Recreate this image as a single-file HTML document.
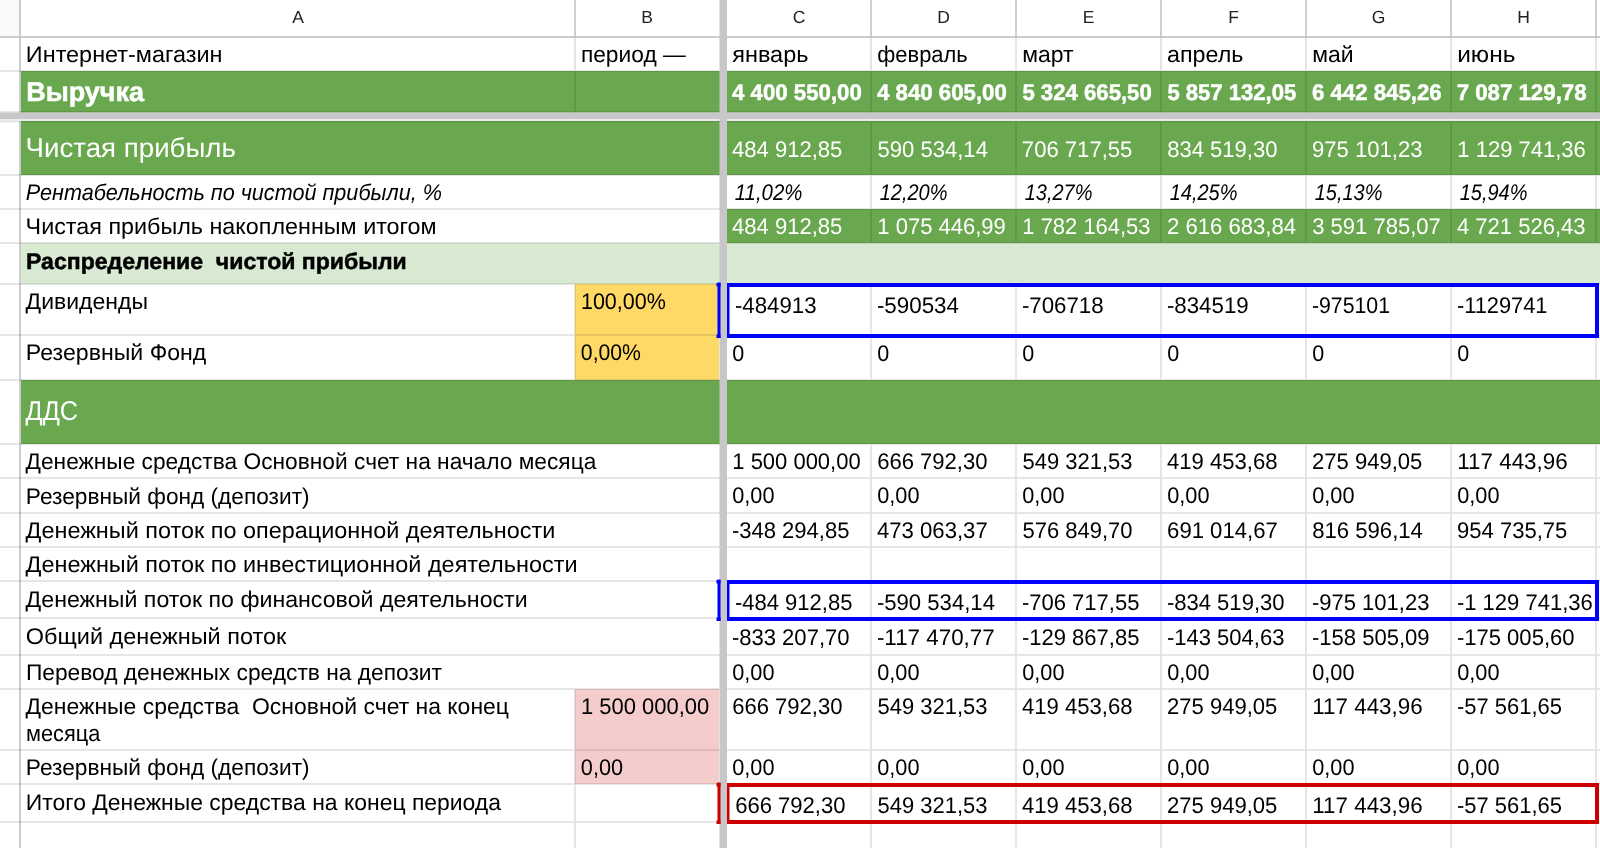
<!DOCTYPE html>
<html lang="ru">
<head>
<meta charset="utf-8">
<title>Sheet</title>
<style>
html, body { margin: 0; padding: 0; width: 1600px; height: 848px; overflow: hidden; background: #fff; }
svg { display: block; will-change: transform; }
</style>
</head>
<body>
<svg width="1600" height="848" viewBox="0 0 1600 848" font-family='"Liberation Sans", sans-serif' text-rendering="geometricPrecision">
<rect x="0.00" y="0.00" width="19.50" height="36.50" fill="#f8f9fa"/>
<rect x="21.00" y="71.00" width="1579.00" height="41.60" fill="#6aa84f"/>
<rect x="21.00" y="121.00" width="1579.00" height="54.00" fill="#6aa84f"/>
<rect x="727.00" y="209.00" width="873.00" height="34.00" fill="#6aa84f"/>
<rect x="21.00" y="243.00" width="1579.00" height="41.00" fill="#d9ead3"/>
<rect x="575.00" y="284.00" width="144.00" height="96.00" fill="#ffd966"/>
<rect x="21.00" y="380.00" width="1579.00" height="64.00" fill="#6aa84f"/>
<rect x="575.00" y="689.00" width="144.00" height="95.00" fill="#f4cccc"/>
<g fill="#000" opacity="0.115"><rect x="0.00" y="70.15" width="1600.00" height="1.70"/><rect x="0.00" y="111.15" width="1600.00" height="1.70"/><rect x="0.00" y="120.55" width="1600.00" height="1.70"/><rect x="0.00" y="174.15" width="1600.00" height="1.70"/><rect x="0.00" y="208.15" width="1600.00" height="1.70"/><rect x="0.00" y="242.15" width="1600.00" height="1.70"/><rect x="0.00" y="283.15" width="1600.00" height="1.70"/><rect x="0.00" y="334.15" width="1600.00" height="1.70"/><rect x="0.00" y="379.15" width="1600.00" height="1.70"/><rect x="0.00" y="443.15" width="1600.00" height="1.70"/><rect x="0.00" y="477.15" width="1600.00" height="1.70"/><rect x="0.00" y="512.15" width="1600.00" height="1.70"/><rect x="0.00" y="546.15" width="1600.00" height="1.70"/><rect x="0.00" y="580.15" width="1600.00" height="1.70"/><rect x="0.00" y="617.15" width="1600.00" height="1.70"/><rect x="0.00" y="654.15" width="1600.00" height="1.70"/><rect x="0.00" y="688.15" width="1600.00" height="1.70"/><rect x="0.00" y="749.15" width="1600.00" height="1.70"/><rect x="0.00" y="783.15" width="1600.00" height="1.70"/><rect x="0.00" y="821.15" width="1600.00" height="1.70"/><rect x="574.15" y="37.00" width="1.70" height="34.00"/><rect x="870.15" y="37.00" width="1.70" height="34.00"/><rect x="1015.15" y="37.00" width="1.70" height="34.00"/><rect x="1160.15" y="37.00" width="1.70" height="34.00"/><rect x="1305.15" y="37.00" width="1.70" height="34.00"/><rect x="1450.15" y="37.00" width="1.70" height="34.00"/><rect x="1595.15" y="37.00" width="1.70" height="34.00"/><rect x="574.15" y="71.00" width="1.70" height="41.60"/><rect x="870.15" y="71.00" width="1.70" height="41.60"/><rect x="1015.15" y="71.00" width="1.70" height="41.60"/><rect x="1160.15" y="71.00" width="1.70" height="41.60"/><rect x="1305.15" y="71.00" width="1.70" height="41.60"/><rect x="1450.15" y="71.00" width="1.70" height="41.60"/><rect x="1595.15" y="71.00" width="1.70" height="41.60"/><rect x="870.15" y="121.00" width="1.70" height="54.00"/><rect x="1015.15" y="121.00" width="1.70" height="54.00"/><rect x="1160.15" y="121.00" width="1.70" height="54.00"/><rect x="1305.15" y="121.00" width="1.70" height="54.00"/><rect x="1450.15" y="121.00" width="1.70" height="54.00"/><rect x="1595.15" y="121.00" width="1.70" height="54.00"/><rect x="870.15" y="175.00" width="1.70" height="34.00"/><rect x="1015.15" y="175.00" width="1.70" height="34.00"/><rect x="1160.15" y="175.00" width="1.70" height="34.00"/><rect x="1305.15" y="175.00" width="1.70" height="34.00"/><rect x="1450.15" y="175.00" width="1.70" height="34.00"/><rect x="1595.15" y="175.00" width="1.70" height="34.00"/><rect x="870.15" y="209.00" width="1.70" height="34.00"/><rect x="1015.15" y="209.00" width="1.70" height="34.00"/><rect x="1160.15" y="209.00" width="1.70" height="34.00"/><rect x="1305.15" y="209.00" width="1.70" height="34.00"/><rect x="1450.15" y="209.00" width="1.70" height="34.00"/><rect x="1595.15" y="209.00" width="1.70" height="34.00"/><rect x="574.15" y="284.00" width="1.70" height="51.00"/><rect x="870.15" y="284.00" width="1.70" height="51.00"/><rect x="1015.15" y="284.00" width="1.70" height="51.00"/><rect x="1160.15" y="284.00" width="1.70" height="51.00"/><rect x="1305.15" y="284.00" width="1.70" height="51.00"/><rect x="1450.15" y="284.00" width="1.70" height="51.00"/><rect x="1595.15" y="284.00" width="1.70" height="51.00"/><rect x="574.15" y="335.00" width="1.70" height="45.00"/><rect x="870.15" y="335.00" width="1.70" height="45.00"/><rect x="1015.15" y="335.00" width="1.70" height="45.00"/><rect x="1160.15" y="335.00" width="1.70" height="45.00"/><rect x="1305.15" y="335.00" width="1.70" height="45.00"/><rect x="1450.15" y="335.00" width="1.70" height="45.00"/><rect x="1595.15" y="335.00" width="1.70" height="45.00"/><rect x="870.15" y="444.00" width="1.70" height="34.00"/><rect x="1015.15" y="444.00" width="1.70" height="34.00"/><rect x="1160.15" y="444.00" width="1.70" height="34.00"/><rect x="1305.15" y="444.00" width="1.70" height="34.00"/><rect x="1450.15" y="444.00" width="1.70" height="34.00"/><rect x="1595.15" y="444.00" width="1.70" height="34.00"/><rect x="870.15" y="478.00" width="1.70" height="35.00"/><rect x="1015.15" y="478.00" width="1.70" height="35.00"/><rect x="1160.15" y="478.00" width="1.70" height="35.00"/><rect x="1305.15" y="478.00" width="1.70" height="35.00"/><rect x="1450.15" y="478.00" width="1.70" height="35.00"/><rect x="1595.15" y="478.00" width="1.70" height="35.00"/><rect x="870.15" y="513.00" width="1.70" height="34.00"/><rect x="1015.15" y="513.00" width="1.70" height="34.00"/><rect x="1160.15" y="513.00" width="1.70" height="34.00"/><rect x="1305.15" y="513.00" width="1.70" height="34.00"/><rect x="1450.15" y="513.00" width="1.70" height="34.00"/><rect x="1595.15" y="513.00" width="1.70" height="34.00"/><rect x="870.15" y="547.00" width="1.70" height="34.00"/><rect x="1015.15" y="547.00" width="1.70" height="34.00"/><rect x="1160.15" y="547.00" width="1.70" height="34.00"/><rect x="1305.15" y="547.00" width="1.70" height="34.00"/><rect x="1450.15" y="547.00" width="1.70" height="34.00"/><rect x="1595.15" y="547.00" width="1.70" height="34.00"/><rect x="870.15" y="581.00" width="1.70" height="37.00"/><rect x="1015.15" y="581.00" width="1.70" height="37.00"/><rect x="1160.15" y="581.00" width="1.70" height="37.00"/><rect x="1305.15" y="581.00" width="1.70" height="37.00"/><rect x="1450.15" y="581.00" width="1.70" height="37.00"/><rect x="1595.15" y="581.00" width="1.70" height="37.00"/><rect x="870.15" y="618.00" width="1.70" height="37.00"/><rect x="1015.15" y="618.00" width="1.70" height="37.00"/><rect x="1160.15" y="618.00" width="1.70" height="37.00"/><rect x="1305.15" y="618.00" width="1.70" height="37.00"/><rect x="1450.15" y="618.00" width="1.70" height="37.00"/><rect x="1595.15" y="618.00" width="1.70" height="37.00"/><rect x="870.15" y="655.00" width="1.70" height="34.00"/><rect x="1015.15" y="655.00" width="1.70" height="34.00"/><rect x="1160.15" y="655.00" width="1.70" height="34.00"/><rect x="1305.15" y="655.00" width="1.70" height="34.00"/><rect x="1450.15" y="655.00" width="1.70" height="34.00"/><rect x="1595.15" y="655.00" width="1.70" height="34.00"/><rect x="574.15" y="689.00" width="1.70" height="61.00"/><rect x="870.15" y="689.00" width="1.70" height="61.00"/><rect x="1015.15" y="689.00" width="1.70" height="61.00"/><rect x="1160.15" y="689.00" width="1.70" height="61.00"/><rect x="1305.15" y="689.00" width="1.70" height="61.00"/><rect x="1450.15" y="689.00" width="1.70" height="61.00"/><rect x="1595.15" y="689.00" width="1.70" height="61.00"/><rect x="574.15" y="750.00" width="1.70" height="34.00"/><rect x="870.15" y="750.00" width="1.70" height="34.00"/><rect x="1015.15" y="750.00" width="1.70" height="34.00"/><rect x="1160.15" y="750.00" width="1.70" height="34.00"/><rect x="1305.15" y="750.00" width="1.70" height="34.00"/><rect x="1450.15" y="750.00" width="1.70" height="34.00"/><rect x="1595.15" y="750.00" width="1.70" height="34.00"/><rect x="574.15" y="784.00" width="1.70" height="38.00"/><rect x="870.15" y="784.00" width="1.70" height="38.00"/><rect x="1015.15" y="784.00" width="1.70" height="38.00"/><rect x="1160.15" y="784.00" width="1.70" height="38.00"/><rect x="1305.15" y="784.00" width="1.70" height="38.00"/><rect x="1450.15" y="784.00" width="1.70" height="38.00"/><rect x="1595.15" y="784.00" width="1.70" height="38.00"/><rect x="574.15" y="822.00" width="1.70" height="26.00"/><rect x="870.15" y="822.00" width="1.70" height="26.00"/><rect x="1015.15" y="822.00" width="1.70" height="26.00"/><rect x="1160.15" y="822.00" width="1.70" height="26.00"/><rect x="1305.15" y="822.00" width="1.70" height="26.00"/><rect x="1450.15" y="822.00" width="1.70" height="26.00"/><rect x="1595.15" y="822.00" width="1.70" height="26.00"/></g>
<g fill="#000" opacity="0.22"><rect x="0.00" y="36.10" width="1600.00" height="1.80"/><rect x="19.10" y="0.00" width="1.80" height="848.00"/><rect x="574.15" y="0.00" width="1.70" height="36.00"/><rect x="870.15" y="0.00" width="1.70" height="36.00"/><rect x="1015.15" y="0.00" width="1.70" height="36.00"/><rect x="1160.15" y="0.00" width="1.70" height="36.00"/><rect x="1305.15" y="0.00" width="1.70" height="36.00"/><rect x="1450.15" y="0.00" width="1.70" height="36.00"/><rect x="1595.15" y="0.00" width="1.70" height="36.00"/></g>
<rect x="0.00" y="112.60" width="1600.00" height="6.40" fill="#c7c7c9"/>
<rect x="0.00" y="119.00" width="1600.00" height="2.00" fill="#ececec"/>
<rect x="719.50" y="0.00" width="7.50" height="848.00" fill="#c7c7c9"/>
<rect x="727.00" y="283.00" width="872.00" height="4.00" fill="#0000ff"/>
<rect x="727.00" y="334.00" width="872.00" height="4.00" fill="#0000ff"/>
<rect x="727.00" y="283.00" width="2.50" height="55.00" fill="#0000ff"/>
<rect x="1595.00" y="283.00" width="4.00" height="55.00" fill="#0000ff"/>
<rect x="717.50" y="282.50" width="3.00" height="55.50" fill="#0000ff"/>
<rect x="716.50" y="283.00" width="4.00" height="3.50" fill="#0000ff"/>
<rect x="716.50" y="334.50" width="4.00" height="3.50" fill="#0000ff"/>
<rect x="727.00" y="580.00" width="872.00" height="4.00" fill="#0000ff"/>
<rect x="727.00" y="617.00" width="872.00" height="4.00" fill="#0000ff"/>
<rect x="727.00" y="580.00" width="2.50" height="41.00" fill="#0000ff"/>
<rect x="1595.00" y="580.00" width="4.00" height="41.00" fill="#0000ff"/>
<rect x="717.50" y="579.50" width="3.00" height="41.50" fill="#0000ff"/>
<rect x="716.50" y="580.00" width="4.00" height="3.50" fill="#0000ff"/>
<rect x="716.50" y="617.50" width="4.00" height="3.50" fill="#0000ff"/>
<rect x="727.00" y="783.00" width="872.00" height="4.00" fill="#cc0000"/>
<rect x="727.00" y="820.00" width="872.00" height="4.00" fill="#cc0000"/>
<rect x="727.00" y="783.00" width="2.50" height="41.00" fill="#cc0000"/>
<rect x="1595.00" y="783.00" width="4.00" height="41.00" fill="#cc0000"/>
<rect x="717.50" y="782.50" width="3.00" height="41.50" fill="#cc0000"/>
<rect x="716.50" y="783.00" width="4.00" height="3.50" fill="#cc0000"/>
<rect x="716.50" y="820.50" width="4.00" height="3.50" fill="#cc0000"/>
<g font-family='"Liberation Sans", sans-serif'>
<text x="298.00" y="23.4" font-size="17.5" text-anchor="middle" fill="#202124">A</text>
<text x="647.00" y="23.4" font-size="17.5" text-anchor="middle" fill="#202124">B</text>
<text x="799.00" y="23.4" font-size="17.5" text-anchor="middle" fill="#202124">C</text>
<text x="943.50" y="23.4" font-size="17.5" text-anchor="middle" fill="#202124">D</text>
<text x="1088.50" y="23.4" font-size="17.5" text-anchor="middle" fill="#202124">E</text>
<text x="1233.50" y="23.4" font-size="17.5" text-anchor="middle" fill="#202124">F</text>
<text x="1378.50" y="23.4" font-size="17.5" text-anchor="middle" fill="#202124">G</text>
<text x="1523.50" y="23.4" font-size="17.5" text-anchor="middle" fill="#202124">H</text>
</g>
<text x="25.86" y="62.30" font-size="22.62" fill="#000" textLength="196.68" lengthAdjust="spacingAndGlyphs" xml:space="preserve">Интернет-магазин</text>
<text x="580.90" y="62.30" font-size="22.62" fill="#000" textLength="104.86" lengthAdjust="spacingAndGlyphs" xml:space="preserve">период —</text>
<text x="732.20" y="62.30" font-size="22.62" fill="#000" textLength="76.27" lengthAdjust="spacingAndGlyphs" xml:space="preserve">январь</text>
<text x="877.28" y="62.30" font-size="22.62" fill="#000" textLength="90.47" lengthAdjust="spacingAndGlyphs" xml:space="preserve">февраль</text>
<text x="1022.30" y="62.30" font-size="22.62" fill="#000" textLength="51.33" lengthAdjust="spacingAndGlyphs" xml:space="preserve">март</text>
<text x="1167.02" y="62.30" font-size="22.62" fill="#000" textLength="76.33" lengthAdjust="spacingAndGlyphs" xml:space="preserve">апрель</text>
<text x="1312.28" y="62.30" font-size="22.62" fill="#000" textLength="41.40" lengthAdjust="spacingAndGlyphs" xml:space="preserve">май</text>
<text x="1457.18" y="62.30" font-size="22.62" fill="#000" textLength="58.29" lengthAdjust="spacingAndGlyphs" xml:space="preserve">июнь</text>
<text x="26.15" y="101.30" font-size="27.19" font-weight="bold" stroke="#ffffff" stroke-width="0.5" fill="#ffffff" textLength="117.89" lengthAdjust="spacingAndGlyphs" xml:space="preserve">Выручка</text>
<text x="732.04" y="99.90" font-size="22.62" font-weight="bold" stroke="#ffffff" stroke-width="0.5" fill="#ffffff" textLength="129.74" lengthAdjust="spacingAndGlyphs" xml:space="preserve">4 400 550,00</text>
<text x="877.04" y="99.90" font-size="22.62" font-weight="bold" stroke="#ffffff" stroke-width="0.5" fill="#ffffff" textLength="129.74" lengthAdjust="spacingAndGlyphs" xml:space="preserve">4 840 605,00</text>
<text x="1022.38" y="99.90" font-size="22.62" font-weight="bold" stroke="#ffffff" stroke-width="0.5" fill="#ffffff" textLength="129.39" lengthAdjust="spacingAndGlyphs" xml:space="preserve">5 324 665,50</text>
<text x="1167.39" y="99.90" font-size="22.62" font-weight="bold" stroke="#ffffff" stroke-width="0.5" fill="#ffffff" textLength="128.89" lengthAdjust="spacingAndGlyphs" xml:space="preserve">5 857 132,05</text>
<text x="1311.95" y="99.90" font-size="22.62" font-weight="bold" stroke="#ffffff" stroke-width="0.5" fill="#ffffff" textLength="129.80" lengthAdjust="spacingAndGlyphs" xml:space="preserve">6 442 845,26</text>
<text x="1456.63" y="99.90" font-size="22.62" font-weight="bold" stroke="#ffffff" stroke-width="0.5" fill="#ffffff" textLength="129.94" lengthAdjust="spacingAndGlyphs" xml:space="preserve">7 087 129,78</text>
<text x="25.62" y="156.50" font-size="27.19" fill="#ffffff" textLength="210.31" lengthAdjust="spacingAndGlyphs" xml:space="preserve">Чистая прибыль</text>
<text x="731.95" y="156.60" font-size="22.62" fill="#ffffff" textLength="110.44" lengthAdjust="spacingAndGlyphs" xml:space="preserve">484 912,85</text>
<text x="877.53" y="156.60" font-size="22.62" fill="#ffffff" textLength="110.40" lengthAdjust="spacingAndGlyphs" xml:space="preserve">590 534,14</text>
<text x="1021.87" y="156.60" font-size="22.62" fill="#ffffff" textLength="110.53" lengthAdjust="spacingAndGlyphs" xml:space="preserve">706 717,55</text>
<text x="1167.15" y="156.60" font-size="22.62" fill="#ffffff" textLength="110.35" lengthAdjust="spacingAndGlyphs" xml:space="preserve">834 519,30</text>
<text x="1312.10" y="156.60" font-size="22.62" fill="#ffffff" textLength="110.32" lengthAdjust="spacingAndGlyphs" xml:space="preserve">975 101,23</text>
<text x="1457.33" y="156.60" font-size="22.62" fill="#ffffff" textLength="128.43" lengthAdjust="spacingAndGlyphs" xml:space="preserve">1 129 741,36</text>
<text x="25.85" y="199.80" font-size="22.62" font-style="italic" fill="#000" textLength="416.03" lengthAdjust="spacingAndGlyphs" xml:space="preserve">Рентабельность по чистой прибыли, %</text>
<text x="734.71" y="199.50" font-size="22.62" font-style="italic" fill="#000" textLength="67.72" lengthAdjust="spacingAndGlyphs" xml:space="preserve">11,02%</text>
<text x="879.71" y="199.50" font-size="22.62" font-style="italic" fill="#000" textLength="67.72" lengthAdjust="spacingAndGlyphs" xml:space="preserve">12,20%</text>
<text x="1024.71" y="199.50" font-size="22.62" font-style="italic" fill="#000" textLength="67.72" lengthAdjust="spacingAndGlyphs" xml:space="preserve">13,27%</text>
<text x="1169.71" y="199.50" font-size="22.62" font-style="italic" fill="#000" textLength="67.72" lengthAdjust="spacingAndGlyphs" xml:space="preserve">14,25%</text>
<text x="1314.71" y="199.50" font-size="22.62" font-style="italic" fill="#000" textLength="67.72" lengthAdjust="spacingAndGlyphs" xml:space="preserve">15,13%</text>
<text x="1459.71" y="199.50" font-size="22.62" font-style="italic" fill="#000" textLength="67.72" lengthAdjust="spacingAndGlyphs" xml:space="preserve">15,94%</text>
<text x="25.59" y="234.30" font-size="22.62" fill="#000" textLength="411.06" lengthAdjust="spacingAndGlyphs" xml:space="preserve">Чистая прибыль накопленным итогом</text>
<text x="731.95" y="234.40" font-size="22.62" fill="#ffffff" textLength="110.44" lengthAdjust="spacingAndGlyphs" xml:space="preserve">484 912,85</text>
<text x="877.33" y="234.40" font-size="22.62" fill="#ffffff" textLength="128.40" lengthAdjust="spacingAndGlyphs" xml:space="preserve">1 075 446,99</text>
<text x="1022.33" y="234.40" font-size="22.62" fill="#ffffff" textLength="128.21" lengthAdjust="spacingAndGlyphs" xml:space="preserve">1 782 164,53</text>
<text x="1166.95" y="234.40" font-size="22.62" fill="#ffffff" textLength="129.11" lengthAdjust="spacingAndGlyphs" xml:space="preserve">2 616 683,84</text>
<text x="1312.16" y="234.40" font-size="22.62" fill="#ffffff" textLength="128.69" lengthAdjust="spacingAndGlyphs" xml:space="preserve">3 591 785,07</text>
<text x="1456.95" y="234.40" font-size="22.62" fill="#ffffff" textLength="128.59" lengthAdjust="spacingAndGlyphs" xml:space="preserve">4 721 526,43</text>
<text x="26.02" y="268.70" font-size="22.62" font-weight="bold" stroke="#000" stroke-width="0.5" fill="#000" textLength="380.75" lengthAdjust="spacingAndGlyphs" xml:space="preserve">Распределение  чистой прибыли</text>
<text x="25.58" y="309.40" font-size="22.62" fill="#000" textLength="122.43" lengthAdjust="spacingAndGlyphs" xml:space="preserve">Дивиденды</text>
<text x="580.96" y="309.30" font-size="22.62" fill="#000" textLength="84.90" lengthAdjust="spacingAndGlyphs" xml:space="preserve">100,00%</text>
<text x="734.91" y="312.60" font-size="22.62" fill="#000" textLength="81.60" lengthAdjust="spacingAndGlyphs" xml:space="preserve">-484913</text>
<text x="876.90" y="312.60" font-size="22.62" fill="#000" textLength="82.12" lengthAdjust="spacingAndGlyphs" xml:space="preserve">-590534</text>
<text x="1021.90" y="312.60" font-size="22.62" fill="#000" textLength="81.74" lengthAdjust="spacingAndGlyphs" xml:space="preserve">-706718</text>
<text x="1166.90" y="312.60" font-size="22.62" fill="#000" textLength="81.78" lengthAdjust="spacingAndGlyphs" xml:space="preserve">-834519</text>
<text x="1311.95" y="312.60" font-size="22.62" fill="#000" textLength="78.04" lengthAdjust="spacingAndGlyphs" xml:space="preserve">-975101</text>
<text x="1456.94" y="312.60" font-size="22.62" fill="#000" textLength="90.52" lengthAdjust="spacingAndGlyphs" xml:space="preserve">-1129741</text>
<text x="25.86" y="360.20" font-size="22.62" fill="#000" textLength="180.47" lengthAdjust="spacingAndGlyphs" xml:space="preserve">Резервный Фонд</text>
<text x="580.86" y="359.60" font-size="22.62" fill="#000" textLength="60.06" lengthAdjust="spacingAndGlyphs" xml:space="preserve">0,00%</text>
<text x="732.24" y="361.20" font-size="22.62" fill="#000" textLength="11.98" lengthAdjust="spacingAndGlyphs" xml:space="preserve">0</text>
<text x="877.24" y="361.20" font-size="22.62" fill="#000" textLength="11.98" lengthAdjust="spacingAndGlyphs" xml:space="preserve">0</text>
<text x="1022.24" y="361.20" font-size="22.62" fill="#000" textLength="11.98" lengthAdjust="spacingAndGlyphs" xml:space="preserve">0</text>
<text x="1167.24" y="361.20" font-size="22.62" fill="#000" textLength="11.98" lengthAdjust="spacingAndGlyphs" xml:space="preserve">0</text>
<text x="1312.24" y="361.20" font-size="22.62" fill="#000" textLength="11.98" lengthAdjust="spacingAndGlyphs" xml:space="preserve">0</text>
<text x="1457.24" y="361.20" font-size="22.62" fill="#000" textLength="11.98" lengthAdjust="spacingAndGlyphs" xml:space="preserve">0</text>
<text x="25.59" y="420.00" font-size="27.19" fill="#ffffff" textLength="52.51" lengthAdjust="spacingAndGlyphs" xml:space="preserve">ДДС</text>
<text x="25.58" y="469.20" font-size="22.62" fill="#000" textLength="570.73" lengthAdjust="spacingAndGlyphs" xml:space="preserve">Денежные средства Основной счет на начало месяца</text>
<text x="732.33" y="468.80" font-size="22.62" fill="#000" textLength="128.30" lengthAdjust="spacingAndGlyphs" xml:space="preserve">1 500 000,00</text>
<text x="877.13" y="468.80" font-size="22.62" fill="#000" textLength="110.37" lengthAdjust="spacingAndGlyphs" xml:space="preserve">666 792,30</text>
<text x="1022.54" y="468.80" font-size="22.62" fill="#000" textLength="109.88" lengthAdjust="spacingAndGlyphs" xml:space="preserve">549 321,53</text>
<text x="1166.95" y="468.80" font-size="22.62" fill="#000" textLength="110.61" lengthAdjust="spacingAndGlyphs" xml:space="preserve">419 453,68</text>
<text x="1311.95" y="468.80" font-size="22.62" fill="#000" textLength="110.44" lengthAdjust="spacingAndGlyphs" xml:space="preserve">275 949,05</text>
<text x="1457.32" y="468.80" font-size="22.62" fill="#000" textLength="110.31" lengthAdjust="spacingAndGlyphs" xml:space="preserve">117 443,96</text>
<text x="25.89" y="503.60" font-size="22.62" fill="#000" textLength="283.70" lengthAdjust="spacingAndGlyphs" xml:space="preserve">Резервный фонд (депозит)</text>
<text x="732.24" y="503.30" font-size="22.62" fill="#000" textLength="42.26" lengthAdjust="spacingAndGlyphs" xml:space="preserve">0,00</text>
<text x="877.24" y="503.30" font-size="22.62" fill="#000" textLength="42.26" lengthAdjust="spacingAndGlyphs" xml:space="preserve">0,00</text>
<text x="1022.24" y="503.30" font-size="22.62" fill="#000" textLength="42.26" lengthAdjust="spacingAndGlyphs" xml:space="preserve">0,00</text>
<text x="1167.24" y="503.30" font-size="22.62" fill="#000" textLength="42.26" lengthAdjust="spacingAndGlyphs" xml:space="preserve">0,00</text>
<text x="1312.24" y="503.30" font-size="22.62" fill="#000" textLength="42.26" lengthAdjust="spacingAndGlyphs" xml:space="preserve">0,00</text>
<text x="1457.24" y="503.30" font-size="22.62" fill="#000" textLength="42.26" lengthAdjust="spacingAndGlyphs" xml:space="preserve">0,00</text>
<text x="25.58" y="538.20" font-size="22.62" fill="#000" textLength="529.69" lengthAdjust="spacingAndGlyphs" xml:space="preserve">Денежный поток по операционной деятельности</text>
<text x="731.92" y="538.00" font-size="22.62" fill="#000" textLength="117.49" lengthAdjust="spacingAndGlyphs" xml:space="preserve">-348 294,85</text>
<text x="876.95" y="538.00" font-size="22.62" fill="#000" textLength="110.78" lengthAdjust="spacingAndGlyphs" xml:space="preserve">473 063,37</text>
<text x="1022.54" y="538.00" font-size="22.62" fill="#000" textLength="109.96" lengthAdjust="spacingAndGlyphs" xml:space="preserve">576 849,70</text>
<text x="1167.12" y="538.00" font-size="22.62" fill="#000" textLength="110.61" lengthAdjust="spacingAndGlyphs" xml:space="preserve">691 014,67</text>
<text x="1312.15" y="538.00" font-size="22.62" fill="#000" textLength="110.79" lengthAdjust="spacingAndGlyphs" xml:space="preserve">816 596,14</text>
<text x="1457.10" y="538.00" font-size="22.62" fill="#000" textLength="110.30" lengthAdjust="spacingAndGlyphs" xml:space="preserve">954 735,75</text>
<text x="25.58" y="572.30" font-size="22.62" fill="#000" textLength="551.91" lengthAdjust="spacingAndGlyphs" xml:space="preserve">Денежный поток по инвестиционной деятельности</text>
<text x="25.58" y="606.60" font-size="22.62" fill="#000" textLength="502.09" lengthAdjust="spacingAndGlyphs" xml:space="preserve">Денежный поток по финансовой деятельности</text>
<text x="734.92" y="610.00" font-size="22.62" fill="#000" textLength="117.49" lengthAdjust="spacingAndGlyphs" xml:space="preserve">-484 912,85</text>
<text x="876.91" y="610.00" font-size="22.62" fill="#000" textLength="118.04" lengthAdjust="spacingAndGlyphs" xml:space="preserve">-590 534,14</text>
<text x="1021.92" y="610.00" font-size="22.62" fill="#000" textLength="117.49" lengthAdjust="spacingAndGlyphs" xml:space="preserve">-706 717,55</text>
<text x="1166.92" y="610.00" font-size="22.62" fill="#000" textLength="117.60" lengthAdjust="spacingAndGlyphs" xml:space="preserve">-834 519,30</text>
<text x="1311.92" y="610.00" font-size="22.62" fill="#000" textLength="117.51" lengthAdjust="spacingAndGlyphs" xml:space="preserve">-975 101,23</text>
<text x="1456.92" y="610.00" font-size="22.62" fill="#000" textLength="135.85" lengthAdjust="spacingAndGlyphs" xml:space="preserve">-1 129 741,36</text>
<text x="25.82" y="643.50" font-size="22.62" fill="#000" textLength="260.43" lengthAdjust="spacingAndGlyphs" xml:space="preserve">Общий денежный поток</text>
<text x="731.92" y="645.30" font-size="22.62" fill="#000" textLength="117.60" lengthAdjust="spacingAndGlyphs" xml:space="preserve">-833 207,70</text>
<text x="876.91" y="645.30" font-size="22.62" fill="#000" textLength="117.83" lengthAdjust="spacingAndGlyphs" xml:space="preserve">-117 470,77</text>
<text x="1021.92" y="645.30" font-size="22.62" fill="#000" textLength="117.49" lengthAdjust="spacingAndGlyphs" xml:space="preserve">-129 867,85</text>
<text x="1166.92" y="645.30" font-size="22.62" fill="#000" textLength="117.51" lengthAdjust="spacingAndGlyphs" xml:space="preserve">-143 504,63</text>
<text x="1311.91" y="645.30" font-size="22.62" fill="#000" textLength="117.70" lengthAdjust="spacingAndGlyphs" xml:space="preserve">-158 505,09</text>
<text x="1456.92" y="645.30" font-size="22.62" fill="#000" textLength="117.60" lengthAdjust="spacingAndGlyphs" xml:space="preserve">-175 005,60</text>
<text x="25.90" y="680.20" font-size="22.62" fill="#000" textLength="416.10" lengthAdjust="spacingAndGlyphs" xml:space="preserve">Перевод денежных средств на депозит</text>
<text x="732.24" y="679.70" font-size="22.62" fill="#000" textLength="42.26" lengthAdjust="spacingAndGlyphs" xml:space="preserve">0,00</text>
<text x="877.24" y="679.70" font-size="22.62" fill="#000" textLength="42.26" lengthAdjust="spacingAndGlyphs" xml:space="preserve">0,00</text>
<text x="1022.24" y="679.70" font-size="22.62" fill="#000" textLength="42.26" lengthAdjust="spacingAndGlyphs" xml:space="preserve">0,00</text>
<text x="1167.24" y="679.70" font-size="22.62" fill="#000" textLength="42.26" lengthAdjust="spacingAndGlyphs" xml:space="preserve">0,00</text>
<text x="1312.24" y="679.70" font-size="22.62" fill="#000" textLength="42.26" lengthAdjust="spacingAndGlyphs" xml:space="preserve">0,00</text>
<text x="1457.24" y="679.70" font-size="22.62" fill="#000" textLength="42.26" lengthAdjust="spacingAndGlyphs" xml:space="preserve">0,00</text>
<text x="25.58" y="714.30" font-size="22.62" fill="#000" textLength="483.38" lengthAdjust="spacingAndGlyphs" xml:space="preserve">Денежные средства  Основной счет на конец</text>
<text x="25.96" y="740.50" font-size="22.62" fill="#000" textLength="74.37" lengthAdjust="spacingAndGlyphs" xml:space="preserve">месяца</text>
<text x="580.93" y="714.20" font-size="22.62" fill="#000" textLength="128.30" lengthAdjust="spacingAndGlyphs" xml:space="preserve">1 500 000,00</text>
<text x="732.13" y="714.00" font-size="22.62" fill="#000" textLength="110.37" lengthAdjust="spacingAndGlyphs" xml:space="preserve">666 792,30</text>
<text x="877.54" y="714.00" font-size="22.62" fill="#000" textLength="109.88" lengthAdjust="spacingAndGlyphs" xml:space="preserve">549 321,53</text>
<text x="1021.95" y="714.00" font-size="22.62" fill="#000" textLength="110.61" lengthAdjust="spacingAndGlyphs" xml:space="preserve">419 453,68</text>
<text x="1166.95" y="714.00" font-size="22.62" fill="#000" textLength="110.44" lengthAdjust="spacingAndGlyphs" xml:space="preserve">275 949,05</text>
<text x="1312.32" y="714.00" font-size="22.62" fill="#000" textLength="110.31" lengthAdjust="spacingAndGlyphs" xml:space="preserve">117 443,96</text>
<text x="1456.92" y="714.00" font-size="22.62" fill="#000" textLength="105.02" lengthAdjust="spacingAndGlyphs" xml:space="preserve">-57 561,65</text>
<text x="25.89" y="775.30" font-size="22.62" fill="#000" textLength="283.70" lengthAdjust="spacingAndGlyphs" xml:space="preserve">Резервный фонд (депозит)</text>
<text x="580.84" y="774.60" font-size="22.62" fill="#000" textLength="42.26" lengthAdjust="spacingAndGlyphs" xml:space="preserve">0,00</text>
<text x="732.24" y="774.50" font-size="22.62" fill="#000" textLength="42.26" lengthAdjust="spacingAndGlyphs" xml:space="preserve">0,00</text>
<text x="877.24" y="774.50" font-size="22.62" fill="#000" textLength="42.26" lengthAdjust="spacingAndGlyphs" xml:space="preserve">0,00</text>
<text x="1022.24" y="774.50" font-size="22.62" fill="#000" textLength="42.26" lengthAdjust="spacingAndGlyphs" xml:space="preserve">0,00</text>
<text x="1167.24" y="774.50" font-size="22.62" fill="#000" textLength="42.26" lengthAdjust="spacingAndGlyphs" xml:space="preserve">0,00</text>
<text x="1312.24" y="774.50" font-size="22.62" fill="#000" textLength="42.26" lengthAdjust="spacingAndGlyphs" xml:space="preserve">0,00</text>
<text x="1457.24" y="774.50" font-size="22.62" fill="#000" textLength="42.26" lengthAdjust="spacingAndGlyphs" xml:space="preserve">0,00</text>
<text x="25.89" y="809.50" font-size="22.62" fill="#000" textLength="475.10" lengthAdjust="spacingAndGlyphs" xml:space="preserve">Итого Денежные средства на конец периода</text>
<text x="735.13" y="812.60" font-size="22.62" fill="#000" textLength="110.37" lengthAdjust="spacingAndGlyphs" xml:space="preserve">666 792,30</text>
<text x="877.54" y="812.60" font-size="22.62" fill="#000" textLength="109.88" lengthAdjust="spacingAndGlyphs" xml:space="preserve">549 321,53</text>
<text x="1021.95" y="812.60" font-size="22.62" fill="#000" textLength="110.61" lengthAdjust="spacingAndGlyphs" xml:space="preserve">419 453,68</text>
<text x="1166.95" y="812.60" font-size="22.62" fill="#000" textLength="110.44" lengthAdjust="spacingAndGlyphs" xml:space="preserve">275 949,05</text>
<text x="1312.32" y="812.60" font-size="22.62" fill="#000" textLength="110.31" lengthAdjust="spacingAndGlyphs" xml:space="preserve">117 443,96</text>
<text x="1456.92" y="812.60" font-size="22.62" fill="#000" textLength="105.02" lengthAdjust="spacingAndGlyphs" xml:space="preserve">-57 561,65</text>
</svg>
</body>
</html>
